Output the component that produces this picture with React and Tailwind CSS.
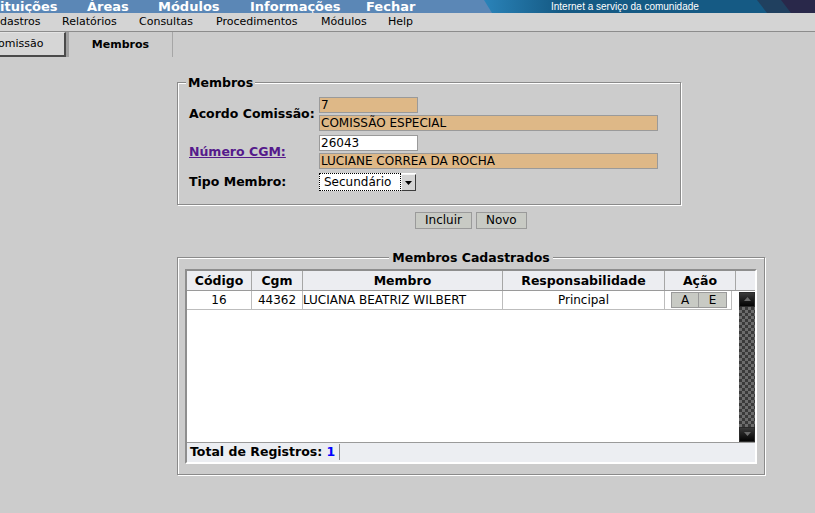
import React from 'react';

const ArrowDown = ({ color = '#000' }) => (
  <svg width="7" height="4" viewBox="0 0 7 4">
    <polygon points="0,0 7,0 3.5,4" fill={color} />
  </svg>
);

const ArrowUp = ({ color = '#000' }) => (
  <svg width="7" height="4" viewBox="0 0 7 4">
    <polygon points="0,4 7,4 3.5,0" fill={color} />
  </svg>
);

const TopBar = () => (
  <div className="relative h-[13px] overflow-hidden bg-[#5b87b6]">
    <svg className="absolute inset-0" width="815" height="13" viewBox="0 0 815 13">
      <defs>
        <linearGradient id="banner" x1="484" y1="0" x2="560" y2="0" gradientUnits="userSpaceOnUse">
          <stop offset="0" stopColor="#2a83b9" />
          <stop offset="1" stopColor="#155a84" />
        </linearGradient>
      </defs>
      <polygon points="484,0 815,0 815,13 492,13" fill="url(#banner)" />
      <polygon points="757,0 815,0 815,13 767,13" fill="#20405f" />
      <polygon points="781,0 815,0 815,13 791,13" fill="#29284a" />
    </svg>
    <div className="relative flex text-[13px] font-bold leading-[13px] text-white">
      <span className="w-[87px] shrink-0">ituições</span>
      <span className="w-[71px] shrink-0">Áreas</span>
      <span className="w-[92px] shrink-0">Módulos</span>
      <span className="w-[116px] shrink-0">Informações</span>
      <span className="w-[185px] shrink-0">Fechar</span>
      <span className="shrink-0 font-['Liberation_Sans',Arial,sans-serif] text-[10px] font-normal">
        Internet a serviço da comunidade
      </span>
    </div>
  </div>
);

const MenuBar = () => (
  <div className="flex h-[19px] items-center border-b border-[#8c8c8c] bg-[#d4d4d4] text-[11px]">
    <span className="w-[62px] shrink-0">dastros</span>
    <span className="w-[77px] shrink-0">Relatórios</span>
    <span className="w-[77px] shrink-0">Consultas</span>
    <span className="w-[105px] shrink-0">Procedimentos</span>
    <span className="w-[67px] shrink-0">Módulos</span>
    <span>Help</span>
  </div>
);

const Tabs = () => (
  <div className="flex h-[25px]">
    <div className="flex w-[66px] items-center overflow-hidden border-t border-r-2 border-b-2 border-t-[#e4e4e4] border-r-[#4a4a4a] border-b-[#4a4a4a] bg-[#d6d6d6] text-[11px]">
      <span className="-ml-[2px]">omissão</span>
    </div>
    <div className="flex w-[107px] items-center justify-center border-l-[3px] border-r border-l-[#a0a0a0] border-r-[#a6a6a6] pt-[1px] text-[11px] font-bold">
      Membros
    </div>
  </div>
);

const Campo = ({ valor, largura, branco }) => (
  <div
    className={`h-[16px] border border-[#9a9a9a] px-[1px] text-[12px] leading-[14px] ${largura} ${
      branco ? 'bg-white' : 'bg-[#deb887]'
    }`}
  >
    {valor}
  </div>
);

const FormMembros = () => (
  <fieldset className="mt-[18px] w-[504px] border border-[#8a8a8a] pt-[7px] pr-[22px] pb-[12px] pl-[11px] shadow-[inset_1px_1px_0_#fff,1px_1px_0_#fff]">
    <legend className="-ml-[3px] bg-[#cccccc] px-[2px] text-[12.5px] font-bold leading-[15px]">Membros</legend>
    <div className="grid grid-cols-[130px_339px] items-center gap-y-[4px]">
      <span className="text-[12.5px] font-bold">Acordo Comissão:</span>
      <div className="flex flex-col gap-[2px]">
        <Campo valor="7" largura="w-[99px]" />
        <Campo valor="COMISSÃO ESPECIAL" largura="w-[339px]" />
      </div>

      <a className="text-[12.5px] font-bold text-[#551a8b] underline">Número CGM:</a>
      <div className="flex flex-col gap-[2px]">
        <Campo valor="26043" largura="w-[99px]" branco />
        <Campo valor="LUCIANE CORREA DA ROCHA" largura="w-[339px]" />
      </div>

      <span className="text-[12.5px] font-bold">Tipo Membro:</span>
      <div className="flex h-[18px] w-[97px] bg-white">
        <span className="flex flex-1 items-center border border-dotted border-black px-[4px] text-[12px]">Secundário</span>
        <span className="mt-[1px] flex w-[15px] items-center justify-center border border-t-[#f4f4f4] border-r-[#3c3c3c] border-b-[#3c3c3c] border-l-[#f4f4f4] bg-[#d4d4d4]">
          <ArrowDown />
        </span>
      </div>
    </div>
  </fieldset>
);

const Botao = ({ children }) => (
  <button className="h-[17px] border border-[#9a9a9a] bg-[#c8cac4] px-[9px] text-[12px] leading-[15px]">
    {children}
  </button>
);

const colunas = [
  { titulo: 'Código', w: 'w-[65px]' },
  { titulo: 'Cgm', w: 'w-[51px]' },
  { titulo: 'Membro', w: 'w-[200px]' },
  { titulo: 'Responsabilidade', w: 'w-[162px]' },
  { titulo: 'Ação', w: 'w-[71px]' },
  { titulo: '', w: 'w-[19px]' },
];

const membros = [{ codigo: 16, cgm: 44362, nome: 'LUCIANA BEATRIZ WILBERT', resp: 'Principal' }];

const ScrollBtn = ({ children }) => (
  <div className="flex h-[15px] items-center justify-center border border-[#2a2a2a] bg-gradient-to-b from-[#3a3a3a] to-[#050505]">
    {children}
  </div>
);

const Grade = () => (
  <fieldset className="mt-[21px] w-[588px] border border-[#8a8a8a] px-[7px] pt-[4px] pb-[10px] shadow-[inset_1px_1px_0_#fff,1px_1px_0_#fff]">
    <legend className="mx-auto bg-[#cccccc] px-[3px] text-[12.5px] font-bold leading-[15px]">Membros Cadastrados</legend>
    <div className="border-2 border-t-[#8e8e8e] border-r-white border-b-white border-l-[#8e8e8e] bg-white">
      <div className="flex h-[20px] border-b border-[#9a9a9a] bg-[#ecedf1] text-[12.5px] font-bold leading-[19px]">
        {colunas.map((c, i) => (
          <div key={i} className={`${c.w} shrink-0 border-r border-[#a6a6a6] text-center last:border-r-0`}>
            {c.titulo}
          </div>
        ))}
      </div>

      <div className="flex h-[151px]">
        <div className="w-[545px]">
          {membros.map((m) => (
            <div key={m.codigo} className="flex h-[19px] border-b border-[#bdbdbd] text-[12px] leading-[18px]">
              <div className="w-[65px] shrink-0 border-r border-[#bdbdbd] text-center">{m.codigo}</div>
              <div className="w-[51px] shrink-0 border-r border-[#bdbdbd] text-center">{m.cgm}</div>
              <div className="w-[200px] shrink-0 border-r border-[#bdbdbd]">{m.nome}</div>
              <div className="w-[162px] shrink-0 border-r border-[#bdbdbd] text-center">{m.resp}</div>
              <div className="flex w-[67px] shrink-0 items-center justify-center border-r border-[#bdbdbd] pl-[2px]">
                <button className="h-[16px] w-[28px] border border-[#9a9a9a] bg-[#c8cac4] text-[12px] leading-[14px]">A</button>
                <button className="h-[16px] w-[28px] border border-l-0 border-[#9a9a9a] bg-[#c8cac4] text-[12px] leading-[14px]">E</button>
              </div>
            </div>
          ))}
        </div>
        <div className="mt-[1px] ml-auto flex h-[150px] w-[16px] flex-col bg-[repeating-conic-gradient(#3a3a3a_0_25%,#6c6c6c_0_50%)] bg-[length:6px_6px]">
          <ScrollBtn>
            <ArrowUp color="#6a6a6a" />
          </ScrollBtn>
          <div className="flex-1" />
          <ScrollBtn>
            <ArrowDown color="#6a6a6a" />
          </ScrollBtn>
        </div>
      </div>

      <div className="flex h-[20px] items-center border-t border-[#9a9a9a] bg-[#eceef2] text-[12.5px] font-bold">
        <span className="pl-[3px]">
          Total de Registros: <span className="text-[#0000ff]">1</span>
        </span>
        <span className="ml-[4px] h-[16px] w-px bg-[#8a8a8a]" />
      </div>
    </div>
  </fieldset>
);

export default function App() {
  return (
    <div className="h-[513px] overflow-hidden bg-[#cccccc] font-['DejaVu_Sans',sans-serif] text-black">
      <TopBar />
      <MenuBar />
      <Tabs />
      <div className="pl-[177px]">
        <FormMembros />
        <div className="mt-[7px] flex gap-[4px] pl-[238px]">
          <Botao>Incluir</Botao>
          <Botao>Novo</Botao>
        </div>
        <Grade />
      </div>
    </div>
  );
}
